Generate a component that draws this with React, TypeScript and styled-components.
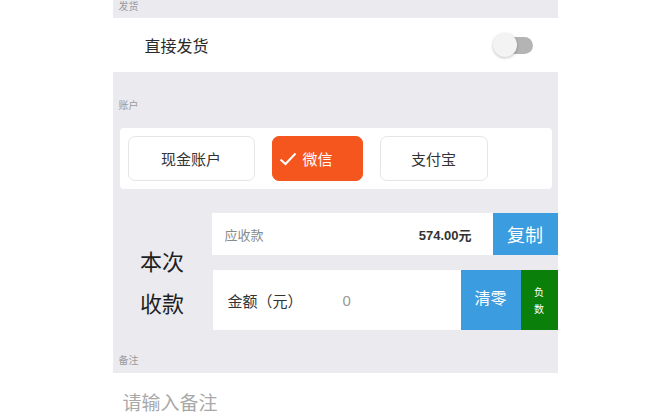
import styled, { createGlobalStyle } from "styled-components";

const GlobalStyle = createGlobalStyle`
  body {
    margin: 0;
    background: #ffffff;
    font-family: "Noto Sans CJK SC", "Liberation Sans", sans-serif;
  }
`;

const accounts = [
  { name: "现金账户", width: 127 },
  { name: "微信", width: 91, active: true },
  { name: "支付宝", width: 108 },
];

const App = () => {
  return (
    <Page>
      <GlobalStyle />
      <SectionLabel $height={18} $top={0}>发货</SectionLabel>
      <SwitchRow>
        <RowTitle>直接发货</RowTitle>
        <Toggle>
          <Knob />
        </Toggle>
      </SwitchRow>
      <SectionLabel $height={56} $top={27}>账户</SectionLabel>
      <AccountCard>
        {accounts.map((a) => (
          <AccountButton key={a.name} $active={a.active} $width={a.width}>
            {a.active && (
              <svg width="18" height="14" viewBox="0 0 18 14">
                <path d="M1.5 7.5 L6.5 12 L16.5 1.5" fill="none" stroke="#fff" strokeWidth="2" />
              </svg>
            )}
            {a.name}
          </AccountButton>
        ))}
      </AccountCard>
      <Payment>
        <PayTitle>
          本次
          <br />
          收款
        </PayTitle>
        <PayRows>
          <DueRow>
            <DueField>
              <DueLabel>应收款</DueLabel>
              <DueValue>574.00元</DueValue>
            </DueField>
            <ActionButton $color="#3b9ce0" $width={65}>复制</ActionButton>
          </DueRow>
          <AmountRow>
            <AmountField>
              <AmountLabel>金额（元）</AmountLabel>
              <AmountValue>0</AmountValue>
            </AmountField>
            <ClearButton>清零</ClearButton>
            <NegativeButton>
              负<br />数
            </NegativeButton>
          </AmountRow>
        </PayRows>
      </Payment>
      <SectionLabel $height={43} $top={24}>备注</SectionLabel>
      <NoteInput>请输入备注</NoteInput>
    </Page>
  );
};

export default App;

const Page = styled.div`
  width: 445px;
  margin: 0 auto;
  background: #ebeaef;
  display: flex;
  flex-direction: column;
`;

const SectionLabel = styled.div<{ $height: number; $top: number }>`
  height: ${(p) => p.$height}px;
  box-sizing: border-box;
  padding: ${(p) => p.$top}px 0 0 6px;
  font-size: 10px;
  line-height: 12px;
  color: #9a9a9e;
  overflow: hidden;
`;

const SwitchRow = styled.div`
  height: 54px;
  background: #fff;
  display: flex;
  align-items: center;
  justify-content: space-between;
  padding: 0 25px 0 32px;
`;

const RowTitle = styled.span`
  font-size: 16px;
  color: #2a2a2a;
`;

const Toggle = styled.div`
  position: relative;
  width: 34px;
  height: 17px;
  border-radius: 9px;
  background: #b4b4b4;
`;

const Knob = styled.div`
  position: absolute;
  left: -6px;
  top: -4px;
  width: 24px;
  height: 24px;
  border-radius: 50%;
  background: #f3f3f3;
  box-shadow: 0 1px 3px rgba(0, 0, 0, 0.25);
`;

const AccountCard = styled.div`
  margin: 0 6px 0 7px;
  height: 61px;
  box-sizing: border-box;
  background: #fff;
  border-radius: 4px;
  display: flex;
  align-items: center;
  gap: 17px;
  padding: 0 8px;
`;

const AccountButton = styled.div<{ $active?: boolean; $width: number }>`
  width: ${(p) => p.$width}px;
  height: 45px;
  box-sizing: border-box;
  border-radius: 7px;
  border: 1px solid ${(p) => (p.$active ? "#f4561e" : "#e6e6e6")};
  background: ${(p) => (p.$active ? "#f4561e" : "#fff")};
  color: ${(p) => (p.$active ? "#fff" : "#333")};
  font-size: 15px;
  display: flex;
  align-items: center;
  justify-content: ${(p) => (p.$active ? "flex-start" : "center")};
  padding-left: ${(p) => (p.$active ? "6px" : "0")};
  gap: 6px;
`;

const Payment = styled.div`
  display: flex;
  margin-top: 24px;
`;

const PayTitle = styled.div`
  width: 99px;
  display: flex;
  align-items: center;
  justify-content: center;
  text-align: center;
  font-size: 22px;
  line-height: 42px;
  color: #1e1e1e;
  padding-top: 18px;
`;

const PayRows = styled.div`
  flex: 1;
  display: flex;
  flex-direction: column;
  gap: 15px;
`;

const DueRow = styled.div`
  height: 42px;
  display: flex;
`;

const DueField = styled.div`
  flex: 1;
  background: #fff;
  display: flex;
  align-items: center;
  justify-content: space-between;
  padding: 0 21px 0 13px;
`;

const DueLabel = styled.span`
  font-size: 13px;
  color: #8a8a8a;
`;

const DueValue = styled.span`
  font-size: 13px;
  font-weight: 600;
  color: #333;
  font-family: "Liberation Sans", "Noto Sans CJK SC", sans-serif;
`;

const ActionButton = styled.div<{ $color: string; $width: number }>`
  width: ${(p) => p.$width}px;
  background: ${(p) => p.$color};
  color: #fff;
  font-size: 18px;
  display: flex;
  align-items: center;
  justify-content: center;
`;

const AmountRow = styled.div`
  height: 60px;
  display: flex;
  margin-left: 1px;
`;

const AmountField = styled.div`
  flex: 1;
  background: #fff;
  display: flex;
  align-items: center;
  padding-left: 15px;
`;

const AmountLabel = styled.span`
  width: 115px;
  font-size: 15px;
  color: #333;
`;

const AmountValue = styled.span`
  font-size: 15px;
  color: #999;
  font-family: "Liberation Sans", sans-serif;
`;

const ClearButton = styled.div`
  width: 60px;
  background: #3b9ce0;
  color: #fff;
  font-size: 16px;
  display: flex;
  justify-content: center;
  padding-top: 15px;
  box-sizing: border-box;
`;

const NegativeButton = styled.div`
  width: 37px;
  background: #0a7f0a;
  color: #fff;
  font-size: 10px;
  line-height: 17px;
  display: flex;
  align-items: center;
  justify-content: center;
  text-align: center;
`;

const NoteInput = styled.div`
  background: #fff;
  height: 60px;
  padding: 15px 0 0 10px;
  box-sizing: border-box;
  font-size: 19px;
  color: #a8a8a8;
  margin: 0 -113px;
  padding-left: 123px;
`;
